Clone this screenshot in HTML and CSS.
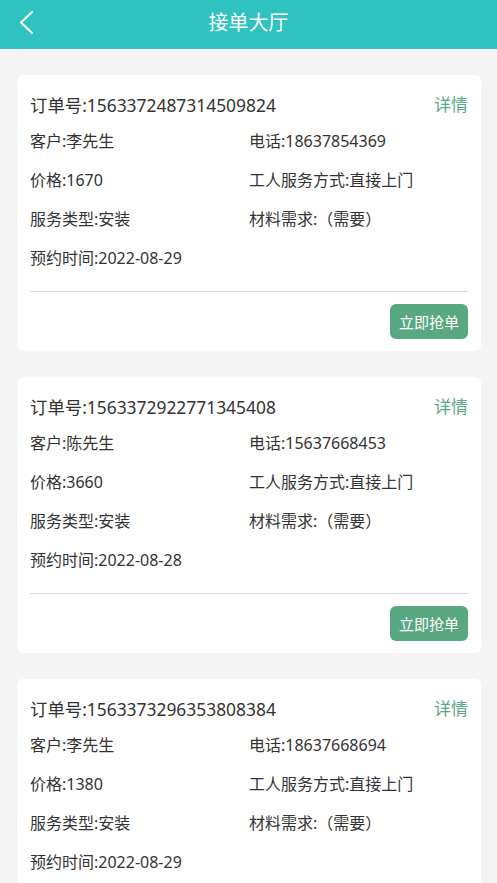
FILE: index.html
```html
<!DOCTYPE html>
<html lang="zh">
<head>
<meta charset="utf-8">
<title>接单大厅</title>
<link rel="stylesheet" href="styles.css">
</head>
<body>
<header class="topbar">
  <span class="back">
    <svg width="16" height="24" viewBox="0 0 16 24"><path d="M13 1 L2 11.5 L13 22" fill="none" stroke="#fff" stroke-width="2" stroke-linecap="round" stroke-linejoin="round"/></svg>
  </span>
  <h1 class="title">接单大厅</h1>
</header>
<main class="list">
  <section class="card">
    <div class="order-line"><span class="order-no">订单号:1563372487314509824</span><span class="detail">详情</span></div>
    <div class="grid">
      <div class="cell">客户:李先生</div><div class="cell">电话:18637854369</div>
      <div class="cell">价格:1670</div><div class="cell">工人服务方式:直接上门</div>
      <div class="cell">服务类型:安装</div><div class="cell">材料需求:（需要）</div>
      <div class="cell">预约时间:2022-08-29</div><div class="cell"></div>
    </div>
    <div class="divider"></div>
    <div class="actions"><span class="btn">立即抢单</span></div>
  </section>
  <section class="card">
    <div class="order-line"><span class="order-no">订单号:1563372922771345408</span><span class="detail">详情</span></div>
    <div class="grid">
      <div class="cell">客户:陈先生</div><div class="cell">电话:15637668453</div>
      <div class="cell">价格:3660</div><div class="cell">工人服务方式:直接上门</div>
      <div class="cell">服务类型:安装</div><div class="cell">材料需求:（需要）</div>
      <div class="cell">预约时间:2022-08-28</div><div class="cell"></div>
    </div>
    <div class="divider"></div>
    <div class="actions"><span class="btn">立即抢单</span></div>
  </section>
  <section class="card">
    <div class="order-line"><span class="order-no">订单号:1563373296353808384</span><span class="detail">详情</span></div>
    <div class="grid">
      <div class="cell">客户:李先生</div><div class="cell">电话:18637668694</div>
      <div class="cell">价格:1380</div><div class="cell">工人服务方式:直接上门</div>
      <div class="cell">服务类型:安装</div><div class="cell">材料需求:（需要）</div>
      <div class="cell">预约时间:2022-08-29</div><div class="cell"></div>
    </div>
    <div class="divider"></div>
    <div class="actions"><span class="btn">立即抢单</span></div>
  </section>
</main>
</body>
</html>
```
FILE: styles.css
```css
* { box-sizing: border-box; }
html, body {
  margin: 0;
  padding: 0;
  background: #f4f4f4;
  font-family: "Noto Sans", "Noto Sans CJK SC", sans-serif;
  color: #333;
}
.topbar {
  height: 49px;
  background: #2ec3c1;
  display: flex;
  align-items: center;
  justify-content: center;
  position: relative;
}
.back {
  position: absolute;
  left: 19px;
  top: 11px;
  width: 16px;
  height: 24px;
  display: block;
}
.back svg { display: block; }
.title {
  margin: 0;
  font-size: 20px;
  font-weight: 400;
  color: #fff;
  line-height: 24px;
  margin-top: -4px;
}
.list {
  padding: 26px 16px 0 17px;
  display: flex;
  flex-direction: column;
  gap: 26px;
}
.card {
  background: #fff;
  border-radius: 6px;
  padding: 18px 13px 12px 13px;
  height: 276px;
}
.order-line {
  display: flex;
  justify-content: space-between;
  align-items: center;
  height: 24px;
}
.order-no {
  font-size: 17.4px;
  line-height: 24px;
}
.detail {
  font-size: 17px;
  line-height: 24px;
  color: #5aa884;
}
.grid {
  display: grid;
  grid-template-columns: 219px 1fr;
  row-gap: 15px;
  margin-top: 12px;
}
.cell {
  font-size: 16px;
  line-height: 24px;
  height: 24px;
  white-space: nowrap;
}
.divider {
  height: 1px;
  background: #d9d9d9;
  margin-top: 20.5px;
}
.actions {
  display: flex;
  justify-content: flex-end;
  margin-top: 12px;
}
.btn {
  display: inline-flex;
  align-items: center;
  justify-content: center;
  width: 78px;
  height: 35px;
  background: #58a882;
  color: #fff;
  font-size: 15px;
  border-radius: 6px;
}
```
